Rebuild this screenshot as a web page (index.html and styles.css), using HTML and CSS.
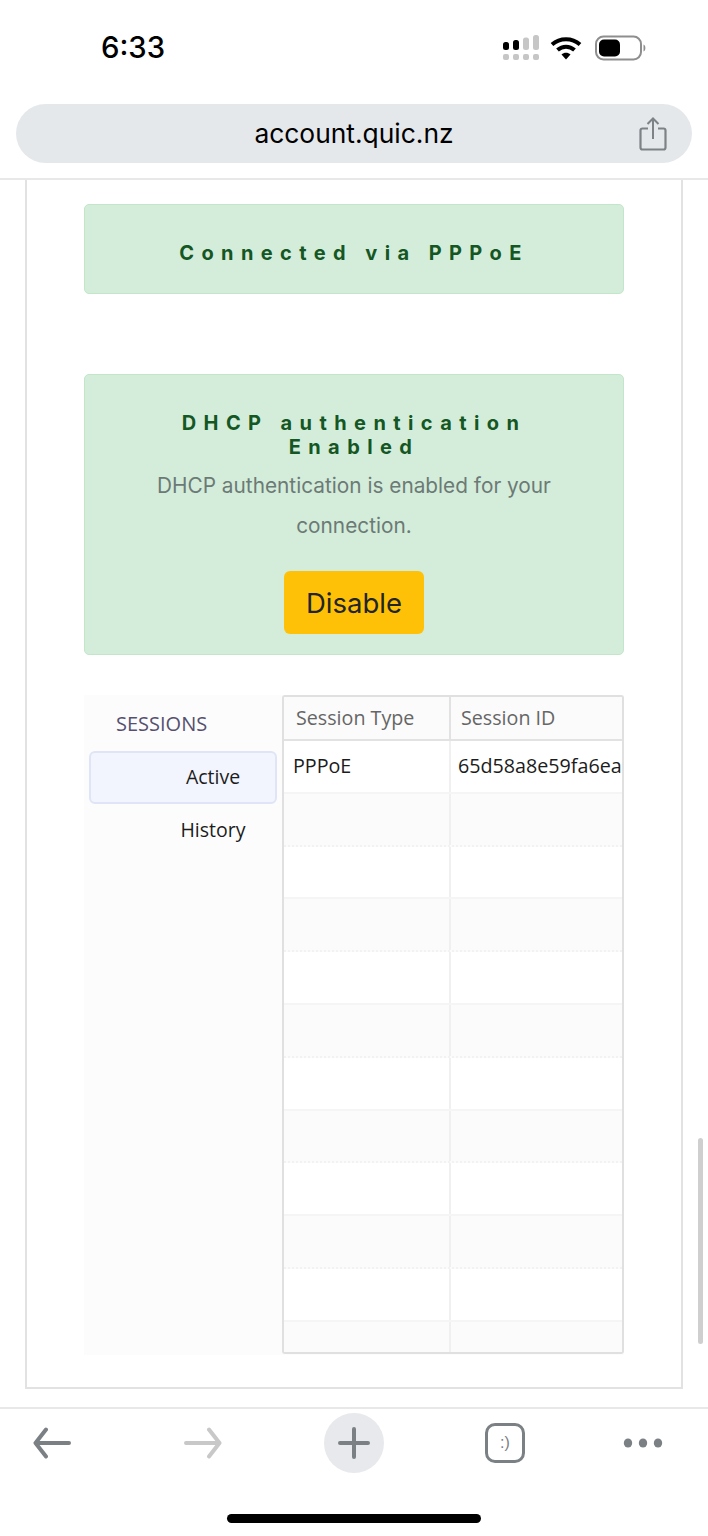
FILE: index.html
```html
<!DOCTYPE html>
<html>

<head>
    <title>account.quic.nz</title>
    <meta name="viewport" content="width=device-width, initial-scale=1.0">
    <link rel="stylesheet" href="styles.css">
</head>

<body>
    <div class="phone">
        <div class="status-bar">
            <div class="clock">6:33</div>
            <div class="status-icons">
                <svg class="icon-signal" width="38" height="26" viewBox="0 0 38 26">
                    <rect x="1" y="7" width="6" height="8" rx="2.5" fill="#000" />
                    <rect x="11" y="5" width="6" height="10" rx="2.5" fill="#000" />
                    <rect x="21" y="2.500" width="6" height="12.500" rx="2.500" fill="#c6c6c6" />
                    <rect x="31" y="0" width="6" height="15" rx="2.500" fill="#c6c6c6" />
                    <rect x="1" y="19" width="6" height="6" rx="2" fill="#c6c6c6" />
                    <rect x="11" y="19" width="6" height="6" rx="2" fill="#c6c6c6" />
                    <rect x="21" y="19" width="6" height="6" rx="2" fill="#c6c6c6" />
                    <rect x="31" y="19" width="6" height="6" rx="2" fill="#c6c6c6" />
                </svg>
                <svg class="icon-wifi" width="32" height="24" viewBox="0 0 32 24">
                    <path d="M2 8.500C10 1.500 22 1.500 30 8.500" fill="none" stroke="#000" stroke-width="4" />
                    <path d="M7.500 14C12.500 9.500 19.500 9.500 24.500 14" fill="none" stroke="#000" stroke-width="4" />
                    <path d="M11.500 18.500C14 16 18 16 20.500 18.500L16 23.500Z" fill="#000" />
                </svg>
                <svg class="icon-battery" width="52" height="26" viewBox="0 0 52 26">
                    <rect x="1" y="1.500" width="45" height="23" rx="7.500" fill="#fff" stroke="#8e8e8e" stroke-width="2" />
                    <rect x="4" y="4.500" width="21" height="17" rx="5" fill="#000" />
                    <path d="M48.500 9.500C51 10 51 16 48.500 16.500Z" fill="#8e8e8e" />
                </svg>
            </div>
        </div>

        <div class="url-area">
            <div class="url-bar">
                <span class="url-text">account.quic.nz</span>
                <svg class="icon-share" width="28" height="34" viewBox="0 0 28 34">
                    <path d="M9 11.500H3.500C2.300 11.500 1.500 12.300 1.500 13.500V30.500C1.500 31.700 2.300 32.500 3.500 32.500H24.500C25.700 32.500 26.500 31.700 26.500 30.500V13.500C26.500 12.300 25.700 11.500 24.500 11.500H19" fill="none" stroke="#7c8286" stroke-width="2.200" />
                    <path d="M14 22V2M8.500 7L14 1.500L19.500 7" fill="none" stroke="#7c8286" stroke-width="2" />
                </svg>
            </div>
        </div>

        <div class="viewport">
            <div class="page-frame">
                <div class="notice notice-pppoe">
                    <h5 class="notice-title">Connected via PPPoE</h5>
                </div>

                <div class="notice notice-dhcp">
                    <h5 class="notice-title">DHCP authentication Enabled</h5>
                    <p class="notice-text">DHCP authentication is enabled for your connection.</p>
                    <button class="btn-disable">Disable</button>
                </div>

                <div class="sessions">
                    <div class="side-menu">
                        <div class="side-title">SESSIONS</div>
                        <div class="side-item side-item-active">Active</div>
                        <div class="side-item">History</div>
                    </div>
                    <div class="grid">
                        <div class="grid-row grid-head">
                            <div class="cell cell-type">Session Type</div>
                            <div class="cell cell-id">Session ID</div>
                        </div>
                        <div class="grid-row">
                            <div class="cell cell-type">PPPoE</div>
                            <div class="cell cell-id">65d58a8e59fa6ea</div>
                        </div>
                        <div class="grid-row stripe"><div class="cell cell-type"></div><div class="cell cell-id"></div></div>
                        <div class="grid-row"><div class="cell cell-type"></div><div class="cell cell-id"></div></div>
                        <div class="grid-row stripe"><div class="cell cell-type"></div><div class="cell cell-id"></div></div>
                        <div class="grid-row"><div class="cell cell-type"></div><div class="cell cell-id"></div></div>
                        <div class="grid-row stripe"><div class="cell cell-type"></div><div class="cell cell-id"></div></div>
                        <div class="grid-row"><div class="cell cell-type"></div><div class="cell cell-id"></div></div>
                        <div class="grid-row stripe"><div class="cell cell-type"></div><div class="cell cell-id"></div></div>
                        <div class="grid-row"><div class="cell cell-type"></div><div class="cell cell-id"></div></div>
                        <div class="grid-row stripe"><div class="cell cell-type"></div><div class="cell cell-id"></div></div>
                        <div class="grid-row"><div class="cell cell-type"></div><div class="cell cell-id"></div></div>
                        <div class="grid-row stripe last-row"><div class="cell cell-type"></div><div class="cell cell-id"></div></div>
                    </div>
                </div>
            </div>
            <div class="scroll-thumb"></div>
        </div>

        <div class="toolbar">
            <div class="slot">
                <svg width="40" height="32" viewBox="0 0 40 32">
                    <path d="M37 16H4M14 2.500L3.500 16L14 29.500" fill="none" stroke="#7b8084" stroke-width="4" stroke-linecap="round" stroke-linejoin="round" />
                </svg>
            </div>
            <div class="slot">
                <svg width="40" height="32" viewBox="0 0 40 32">
                    <path d="M3 16H36M26 2.500L36.500 16L26 29.500" fill="none" stroke="#c8c8c8" stroke-width="4" stroke-linecap="round" stroke-linejoin="round" />
                </svg>
            </div>
            <div class="slot plus-btn">
                <svg width="32" height="32" viewBox="0 0 32 32">
                    <path d="M16 2V30M2 16H30" fill="none" stroke="#7b8084" stroke-width="4" stroke-linecap="round" />
                </svg>
            </div>
            <div class="slot">
                <div class="tabs-btn">:)</div>
            </div>
            <div class="slot slot-more">
                <svg width="40" height="12" viewBox="0 0 40 12">
                    <ellipse cx="5" cy="6" rx="4.200" ry="4.500" fill="#7b8084" />
                    <ellipse cx="20" cy="6" rx="4.200" ry="4.500" fill="#7b8084" />
                    <ellipse cx="35" cy="6" rx="4.200" ry="4.500" fill="#7b8084" />
                </svg>
            </div>
        </div>

        <div class="home-area">
            <div class="home-bar"></div>
        </div>
    </div>
</body>

</html>
```

FILE: styles.css
```css
html,
body {
    margin: 0;
    padding: 0;
    background-color: #fff;
}

.phone {
    width: 708px;
    height: 1536px;
    display: flex;
    flex-direction: column;
    overflow: hidden;
    font-family: "Liberation Sans", Arial, sans-serif;
}

/* status bar */
.status-bar {
    height: 104px;
    flex: none;
    box-sizing: border-box;
    padding: 28px 61px 0 101px;
    display: flex;
    justify-content: space-between;
    align-items: flex-start;
}

.clock {
    font-family: Inter, sans-serif;
    font-size: 29.300px;
    line-height: 40px;
    font-weight: 500;
    color: #000;
}

.status-icons {
    display: flex;
    align-items: center;
    gap: 10px;
    margin-top: 7px;
}

.icon-wifi {
    margin-right: 3px;
}

/* url bar */
.url-area {
    height: 76px;
    flex: none;
    box-sizing: border-box;
    padding: 0 16px;
    border-bottom: 2px solid #e8e8e8;
}

.url-bar {
    height: 59px;
    background-color: #e5e8eb;
    border-radius: 30px;
    display: flex;
    align-items: center;
    justify-content: center;
    position: relative;
}

.url-text {
    font-family: Inter, sans-serif;
    font-size: 26.400px;
    line-height: 58px;
    margin-bottom: 2px;
    color: #000;
}

.icon-share {
    position: absolute;
    right: 25px;
    top: 13px;
}

/* page content */
.viewport {
    height: 1227px;
    flex: none;
    position: relative;
    overflow: hidden;
    padding: 0 25px;
}

.page-frame {
    height: 1209px;
    box-sizing: border-box;
    border: 2px solid #e2e2e2;
    border-top: none;
    padding: 24px 57px 0 57px;
}

.notice {
    box-sizing: border-box;
    background-color: #d4edda;
    border: 1px solid #c3e6cb;
    border-radius: 5px;
    text-align: center;
}

.notice-pppoe {
    height: 90px;
    padding-top: 36px;
    margin-bottom: 80px;
}

.notice-dhcp {
    height: 281px;
    padding: 36px 60px 0;
    margin-bottom: 40px;
}

.notice-title {
    margin: 0;
    font-family: Inter, sans-serif;
    font-size: 20px;
    line-height: 24px;
    font-weight: 700;
    letter-spacing: 7.400px;
    color: #155724;
}

.notice-text {
    margin: 7px -10px 25px;
    font-family: Inter, sans-serif;
    font-size: 20.800px;
    line-height: 40px;
    color: #6c7a76;
}

.btn-disable {
    width: 140px;
    height: 63px;
    border: none;
    border-radius: 6px;
    background-color: #ffc107;
    font-family: Inter, sans-serif;
    font-size: 27.500px;
    color: #212529;
}

/* sessions */
.sessions {
    display: flex;
    height: 660px;
    background-color: #fcfcfc;
}

.side-menu {
    width: 198px;
    flex: none;
    box-sizing: border-box;
    padding: 0 5px;
    font-family: "Open Sans", sans-serif;
}

.side-title {
    height: 56px;
    padding-left: 27px;
    font-size: 20px;
    line-height: 57px;
    color: #55506f;
}

.side-item {
    height: 53px;
    padding-left: 60px;
    font-size: 19.500px;
    line-height: 52px;
    text-align: center;
    color: #1c1c1c;
    box-sizing: border-box;
}

.side-item-active {
    background-color: #f2f5fe;
    border: 2px solid #dfe5f6;
    border-radius: 6px;
    line-height: 48px;
}

.grid {
    flex: 1;
    height: 659px;
    box-sizing: border-box;
    overflow: hidden;
    background-color: #fff;
    border: 2px solid #e0e0e0;
    border-radius: 3px;
    font-family: "Open Sans", sans-serif;
    font-size: 19.700px;
    color: #1c1c1c;
}

.grid-row {
    display: flex;
    height: 52.800px;
    box-sizing: border-box;
    border-bottom: 2px solid #f5f5f5;
}

.grid-head {
    height: 44px;
    background-color: #fbfbfb;
    border-bottom: 2px solid #e2e2e2;
    color: #666;
}

.grid-head .cell {
    padding-left: 12px;
    line-height: 42px;
    border-right-color: #e2e2e2;
}

.stripe {
    background-color: #fbfbfb;
    border-bottom: 2px dotted #f2f2f2;
}

.last-row {
    border-bottom: none;
}

.cell {
    box-sizing: border-box;
    padding-left: 9px;
    line-height: 50px;
    white-space: nowrap;
    overflow: hidden;
    border-right: 2px solid #f0f0f0;
}

.cell-type {
    width: 167px;
}

.cell-id {
    flex: 1;
    border-right: none;
    padding-left: 7px;
}

.grid-head .cell-id {
    padding-left: 10px;
}

.scroll-thumb {
    position: absolute;
    left: 698px;
    top: 958px;
    width: 5px;
    height: 206px;
    border-radius: 3px;
    background-color: #cfcfcf;
}

/* bottom toolbar */
.toolbar {
    height: 66px;
    flex: none;
    box-sizing: border-box;
    border-top: 2px solid #e8e8e8;
    padding: 4px 0 0 22px;
    display: flex;
    gap: 91px;
    align-items: center;
}

.slot {
    width: 60px;
    height: 60px;
    display: flex;
    align-items: center;
    justify-content: center;
}

.slot-more {
    margin-left: -13px;
}

.plus-btn {
    border-radius: 50%;
    background-color: #e7e9ec;
}

.tabs-btn {
    width: 40px;
    height: 40px;
    box-sizing: border-box;
    border: 3px solid #7b8084;
    border-radius: 10px;
    font-family: "Liberation Sans", sans-serif;
    font-size: 16px;
    line-height: 33px;
    text-align: center;
    color: #7b8084;
}

.home-area {
    flex: 1;
    display: flex;
    justify-content: center;
    padding-top: 41px;
    box-sizing: border-box;
}

.home-bar {
    width: 254px;
    height: 9px;
    border-radius: 5px;
    background-color: #000;
}
```
